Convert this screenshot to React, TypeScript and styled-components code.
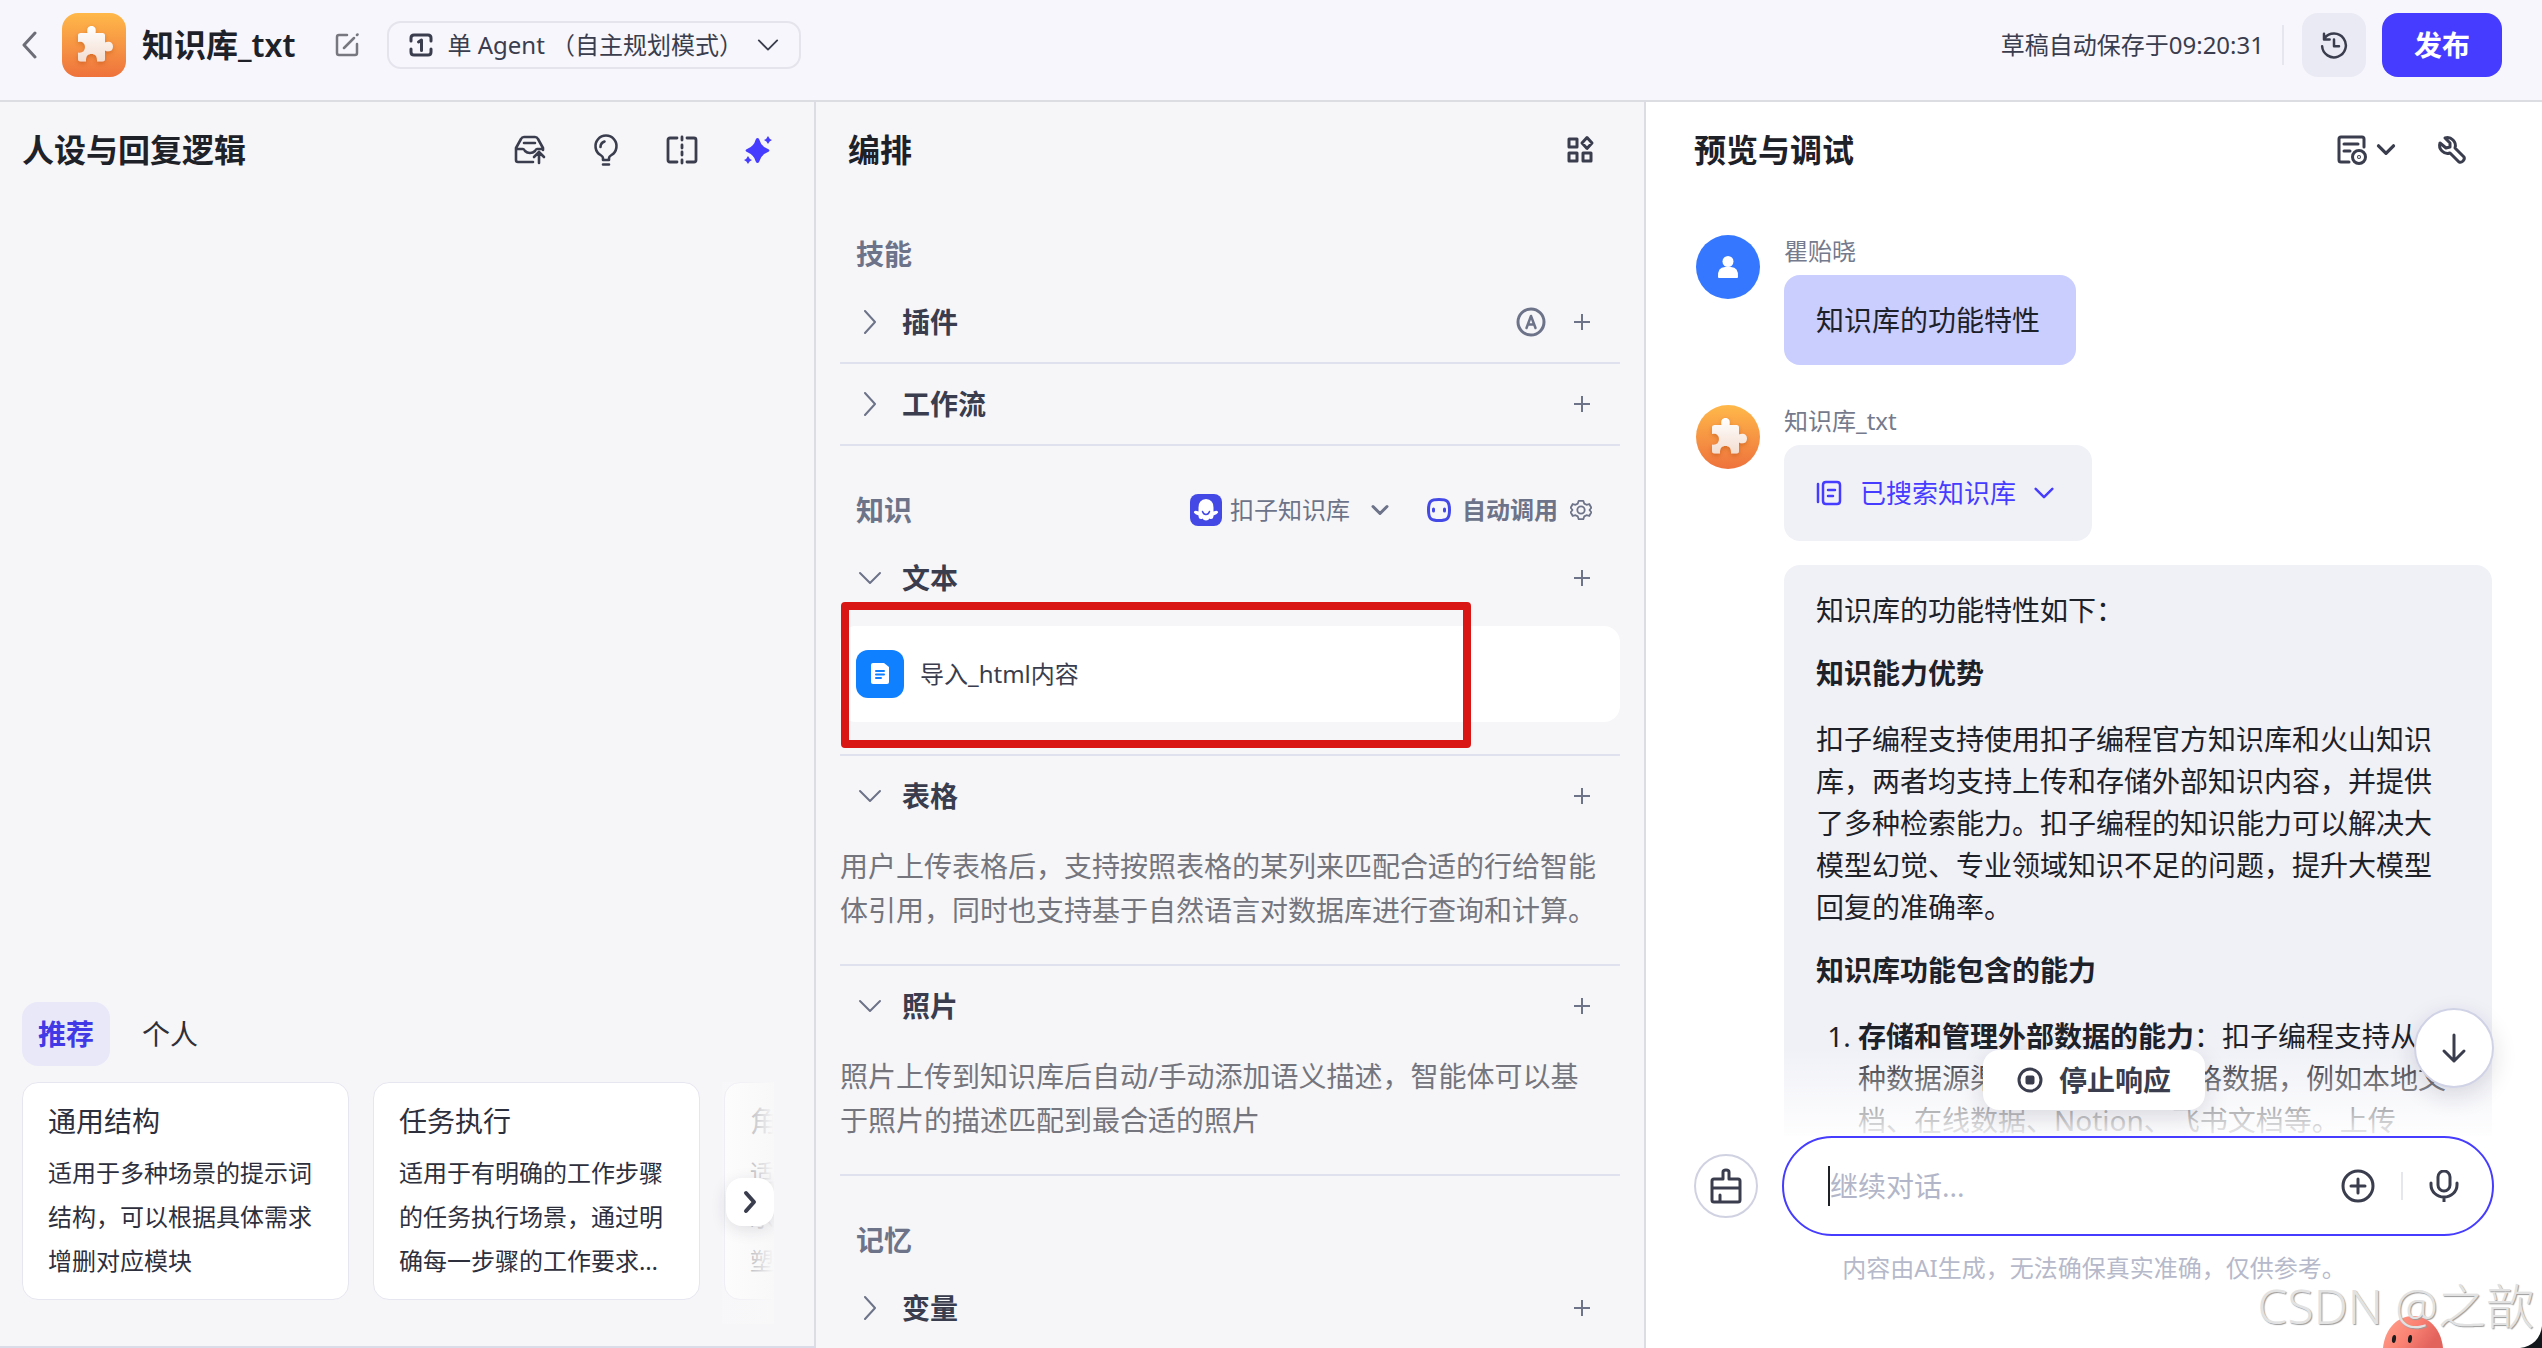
import React from 'react';
import styled, { createGlobalStyle } from 'styled-components';

const ink = '#1f2129';
const inkSoft = '#3a3d4d';
const muted = '#6d7388';
const brand = '#463cff';
const line = '#dcdce3';
const divider = '#dfe1ef';

const GlobalStyle = createGlobalStyle`
  *, *::before, *::after { box-sizing: border-box; }
  html, body { margin: 0; padding: 0; }
  body {
    font-family: "Noto Sans", "Noto Sans CJK SC", sans-serif;
    font-size: 28px;
    line-height: 40px;
    color: ${ink};
    background: #fff;
    overflow: hidden;
  }
  button, input, select { font: inherit; color: inherit; }
  h1, h2, h3, p, ol, ul { margin: 0; padding: 0; font: inherit; }
`;

/* ---------- shell ---------- */

const Page = styled.div`
  display: flex;
  flex-direction: column;
  height: 100vh;
  overflow: hidden;
  position: relative;
`;

const Columns = styled.main`
  flex: 1;
  min-height: 0;
  display: grid;
  grid-template-columns: 816fr 830fr 896fr;
  grid-template-rows: minmax(0, 1fr);
`;

const Panel = styled.section<{ $plain?: boolean; $footed?: boolean }>`
  display: flex;
  flex-direction: column;
  min-width: 0;
  min-height: 0;
  overflow: hidden;
  background: ${p => (p.$plain ? '#fff' : '#f6f6f9')};
  border-right: ${p => (p.$plain ? 'none' : `2px solid ${line}`)};
  border-bottom: ${p => (p.$footed ? '2px solid #dadde8' : 'none')};
`;

const PanelHeader = styled.header<{ $left: number; $right: number }>`
  flex: none;
  display: flex;
  align-items: center;
  justify-content: space-between;
  height: 96px;
  padding: 0 ${p => p.$right}px 0 ${p => p.$left}px;
`;

const PanelTitle = styled.h2`
  font-size: 32px;
  line-height: 40px;
  font-weight: 600;
`;

const Row = styled.div<{ $gap: number }>`
  display: flex;
  align-items: center;
  gap: ${p => p.$gap}px;
`;

const IconButton = styled.button<{ $tone?: string }>`
  display: inline-flex;
  align-items: center;
  justify-content: center;
  flex: none;
  padding: 0;
  border: 0;
  background: none;
  color: ${p => p.$tone ?? inkSoft};
  cursor: pointer;
  svg { display: block; }
`;

/* ---------- top bar ---------- */

const TopBar = styled.header`
  flex: none;
  display: flex;
  align-items: flex-start;
  justify-content: space-between;
  height: 102px;
  padding: 13px 40px 0 18px;
  background: #f7f6fc;
  border-bottom: 2px solid ${line};
`;

const AgentTitle = styled.h1`
  font-size: 32px;
  line-height: 40px;
  font-weight: 600;
`;

const ModeBox = styled.label`
  display: flex;
  align-items: center;
  gap: 14px;
  height: 48px;
  padding: 0 20px;
  border: 2px solid #e5e4ec;
  border-radius: 14px;
  color: ${inkSoft};
`;

const PlainSelect = styled.select<{ $width: number }>`
  appearance: none;
  width: ${p => p.$width}px;
  padding: 0;
  border: 0;
  outline: 0;
  background: none;
  font-size: 24px;
  line-height: 32px;
`;

const SavedNote = styled.span`
  font-size: 24px;
  line-height: 32px;
  color: ${inkSoft};
`;

const Separator = styled.span<{ $height: number }>`
  flex: none;
  width: 2px;
  height: ${p => p.$height}px;
  background: #e6e6ee;
`;

const HistoryButton = styled(IconButton)`
  width: 64px;
  height: 64px;
  border-radius: 16px;
  background: #eaeaf4;
`;

const PublishButton = styled.button`
  height: 64px;
  padding: 0 32px;
  border: 0;
  border-radius: 16px;
  background: ${brand};
  color: #fff;
  font-size: 28px;
  line-height: 40px;
  font-weight: 600;
  cursor: pointer;
`;

/* ---------- prompt panel ---------- */

const PromptSpace = styled.div`
  flex: 1;
`;

const Library = styled.div`
  display: flex;
  flex-direction: column;
  gap: 16px;
  padding: 0 40px 22px 22px;
`;

const Tab = styled.button<{ $active?: boolean }>`
  height: 64px;
  padding: 0 16px;
  border: 0;
  border-radius: 16px;
  background: ${p => (p.$active ? '#e8e8f9' : 'transparent')};
  color: ${p => (p.$active ? '#4338e6' : '#2f3038')};
  font-size: 28px;
  line-height: 40px;
  font-weight: ${p => (p.$active ? 600 : 400)};
  cursor: pointer;
`;

const CardStrip = styled.div`
  position: relative;
  display: flex;
  gap: 24px;
  padding-bottom: 24px;
  overflow: hidden;
`;

const Card = styled.article`
  flex: none;
  width: 327px;
  height: 218px;
  padding: 18px 25px;
  border: 1px solid #e6e6f0;
  border-radius: 16px;
  background: #fff;
  color: #2e2f3c;
`;

const CardTitle = styled.h3`
  font-size: 28px;
  line-height: 40px;
  margin-bottom: 10px;
`;

const CardText = styled.p`
  font-size: 24px;
  line-height: 44px;
  display: -webkit-box;
  -webkit-box-orient: vertical;
  -webkit-line-clamp: 3;
  overflow: hidden;
`;

const StripFade = styled.div`
  position: absolute;
  top: 0;
  right: 0;
  bottom: 0;
  width: 52px;
  background: linear-gradient(90deg, rgba(249, 249, 250, 0.4), #f8f8f9);
`;

const StripNext = styled(IconButton)`
  position: absolute;
  right: 0;
  top: 96px;
  width: 48px;
  height: 48px;
  border-radius: 16px;
  background: #fff;
  box-shadow: 0 4px 16px rgba(30, 30, 60, 0.12);
`;

/* ---------- orchestration panel ---------- */

const SkillList = styled.div`
  display: flex;
  flex-direction: column;
  padding: 28px 24px 0;
`;

const Group = styled.section`
  & + & { margin-top: 36px; }
`;

const GroupHead = styled.div`
  display: flex;
  align-items: center;
  justify-content: space-between;
  height: 56px;
  padding: 0 28px 0 16px;
  color: ${muted};
`;

const GroupTitle = styled.h3`
  font-size: 28px;
  line-height: 40px;
  font-weight: 600;
`;

const SmallChoice = styled.label`
  display: flex;
  align-items: center;
  gap: 8px;
  color: ${muted};
`;

const AutoCall = styled.button`
  display: flex;
  align-items: center;
  gap: 10px;
  padding: 0;
  border: 0;
  background: none;
  font-size: 24px;
  line-height: 32px;
  font-weight: 600;
  cursor: pointer;
`;

const Entry = styled.div`
  border-bottom: 2px solid ${divider};
`;

const EntryHead = styled.div`
  display: flex;
  align-items: center;
  justify-content: space-between;
  height: 80px;
  padding: 0 26px 0 18px;
`;

const EntryToggle = styled.button`
  display: flex;
  align-items: center;
  gap: 20px;
  padding: 0;
  border: 0;
  background: none;
  color: ${muted};
  cursor: pointer;
`;

const EntryName = styled.span`
  font-size: 28px;
  line-height: 40px;
  font-weight: 600;
  color: ${inkSoft};
`;

const EntryBody = styled.div`
  position: relative;
  padding: 8px 0 32px;
`;

const EntryNote = styled.p`
  padding-right: 20px;
  font-size: 28px;
  line-height: 44px;
  color: #74757d;
`;

const FileCard = styled.div`
  display: flex;
  align-items: center;
  gap: 16px;
  height: 96px;
  padding: 0 16px;
  border-radius: 16px;
  background: #fff;
  color: ${inkSoft};
  font-size: 24px;
  line-height: 32px;
`;

const FileBadge = styled.span`
  display: grid;
  place-items: center;
  width: 48px;
  height: 48px;
  border-radius: 12px;
  background: #0f80ff;
`;

const Marker = styled.div`
  position: absolute;
  top: -16px;
  bottom: 6px;
  left: 1px;
  right: 149px;
  border: 8px solid #d91613;
  border-radius: 4px;
`;

/* ---------- preview panel ---------- */

const Thread = styled.div`
  position: relative;
  flex: 1;
  min-height: 0;
  overflow: hidden;
  padding: 37px 50px 0;
  display: flex;
  flex-direction: column;
  gap: 40px;
`;

const Message = styled.article`
  display: flex;
  align-items: flex-start;
  gap: 24px;
`;

const MessageBody = styled.div`
  flex: 1;
  min-width: 0;
  display: flex;
  flex-direction: column;
  align-items: flex-start;
`;

const Sender = styled.span`
  margin-bottom: 8px;
  font-size: 24px;
  line-height: 32px;
  color: #757a8c;
`;

const Bubble = styled.div<{ $mine?: boolean }>`
  padding: 24px 36px 24px 32px;
  border-radius: 16px;
  background: ${p => (p.$mine ? '#c9ceff' : '#f0f1f7')};
  line-height: 42px;
`;

const Searched = styled.button`
  display: flex;
  align-items: center;
  gap: 18px;
  height: 96px;
  margin-bottom: 24px;
  padding: 0 38px 0 32px;
  border: 0;
  border-radius: 16px;
  background: #f0f1f7;
  color: ${brand};
  font-size: 26px;
  line-height: 40px;
  cursor: pointer;
`;

const Answer = styled(Bubble)`
  width: 100%;
  p + h3 { margin-top: 21px; }
`;

const AnswerHeading = styled.h3`
  font-weight: 700;
  margin-bottom: 24px;
`;

const AnswerList = styled.ol`
  padding-left: 42px;
  strong { font-weight: 700; }
`;

const UserAvatar = styled.span`
  display: grid;
  place-items: center;
  flex: none;
  width: 64px;
  height: 64px;
  border-radius: 50%;
  background: #3578ff;
`;

const ThreadFade = styled.div`
  position: absolute;
  left: 0;
  right: 0;
  bottom: 0;
  height: 88px;
  background: linear-gradient(rgba(255, 255, 255, 0), rgba(255, 255, 255, 0.92));
`;

const StopButton = styled.button`
  position: absolute;
  left: 50%;
  bottom: 26px;
  transform: translateX(-50%);
  display: flex;
  align-items: center;
  gap: 16px;
  height: 60px;
  padding: 0 34px;
  border: 0;
  border-radius: 16px;
  background: #fff;
  color: ${inkSoft};
  font-size: 28px;
  line-height: 40px;
  font-weight: 600;
  white-space: nowrap;
  box-shadow: 0 8px 24px rgba(30, 30, 60, 0.14);
  cursor: pointer;
`;

const ToBottom = styled(IconButton)`
  position: absolute;
  right: 48px;
  bottom: 48px;
  width: 80px;
  height: 80px;
  border: 2px solid #d0d2e6;
  border-radius: 50%;
  background: #fff;
  box-shadow: 0 8px 24px rgba(30, 30, 60, 0.14);
`;

const Composer = styled.form`
  flex: none;
  display: flex;
  align-items: center;
  gap: 24px;
  padding: 0 48px;
`;

const ClearButton = styled(IconButton)`
  width: 64px;
  height: 64px;
  border: 2px solid #d0d2e2;
  border-radius: 50%;
`;

const InputShell = styled.div`
  flex: 1;
  display: flex;
  align-items: center;
  gap: 25px;
  height: 100px;
  padding: 0 32px 0 44px;
  border: 2px solid ${brand};
  border-radius: 50px;
  background: #fff;
`;

const InputField = styled.div`
  flex: 1;
  display: flex;
  align-items: center;
  height: 40px;
`;

const Caret = styled.span`
  width: 2px;
  height: 40px;
  background: ${ink};
`;

const MessageInput = styled.input`
  flex: 1;
  min-width: 0;
  padding: 0;
  border: 0;
  outline: 0;
  background: none;
  font-size: 28px;
  &::placeholder { color: #b2b6c8; opacity: 1; }
`;

const Disclaimer = styled.p`
  flex: none;
  padding: 16px 0 64px;
  text-align: center;
  font-size: 24px;
  line-height: 32px;
  color: #b6b9ca;
`;

/* ---------- overlays ---------- */

const Watermark = styled.div`
  position: absolute;
  right: 8px;
  bottom: 10px;
  font-size: 48px;
  line-height: 64px;
  font-weight: 300;
  color: #e2e2e2;
  text-shadow: 1px 1px 1px #9b9b9b;
  pointer-events: none;
`;

const Mascot = styled.svg`
  position: absolute;
  right: 98px;
  bottom: 0;
`;

const WindowCorner = styled.svg`
  position: absolute;
  right: 0;
  bottom: 0;
`;

/* ---------- icons ---------- */

type IconProps = { size: number; box?: number; width?: number; children: React.ReactNode };

const Icon = ({ size, box = 24, width = 2, children }: IconProps) => (
  <svg width={size} height={size} viewBox={`0 0 ${box} ${box}`} fill="none" stroke="currentColor"
    strokeWidth={width} strokeLinecap="round" strokeLinejoin="round" aria-hidden="true">
    {children}
  </svg>
);

const ChevronDown = ({ size, width = 2 }: { size: number; width?: number }) => (
  <Icon size={size} width={width}><path d="M2 7l10 10L22 7" /></Icon>
);

const ChevronRight = ({ size, width = 2 }: { size: number; width?: number }) => (
  <Icon size={size} width={width}><path d="M7 1l10 11L7 23" /></Icon>
);

const Plus = () => <Icon size={24}><path d="M4 12h16M12 4v16" strokeLinecap="butt" /></Icon>;

const AvatarArt = styled.svg`
  flex: none;
  display: block;
`;

const PuzzleAvatar = ({ id, round }: { id: string; round?: boolean }) => (
  <AvatarArt width="64" height="64" viewBox="0 0 64 64" aria-hidden="true">
    <defs>
      <linearGradient id={`${id}-bg`} x1="0" y1="0" x2="0" y2="1">
        <stop offset="0" stopColor="#ffb84a" />
        <stop offset="1" stopColor="#ee723c" />
      </linearGradient>
      <linearGradient id={`${id}-fg`} x1="0" y1="0" x2="0" y2="1">
        <stop offset="0" stopColor="#ffffff" />
        <stop offset="1" stopColor="#f3ddd0" />
      </linearGradient>
      <filter id={`${id}-sh`} x="-30%" y="-30%" width="160%" height="160%">
        <feDropShadow dx="0" dy="2" stdDeviation="2" floodColor="#a8400f" floodOpacity="0.4" />
      </filter>
    </defs>
    <rect width="64" height="64" rx={round ? 32 : 16} fill={`url(#${id}-bg)`} />
    <path filter={`url(#${id}-sh)`} fill={`url(#${id}-fg)`}
      d="M18.5 20H25.5C24.5 15 26.5 13 29.5 13S34.5 15 33.5 20H40.5Q43 20 43 22.500V29.500C47 27.500 51 29 51 33.500S47 39.500 43 37.500V46Q43 48.500 40.500 48.500H35V47C35 43 33 41 29.500 41S24 43 24 47V48.500H18.500Q16 48.500 16 46V39.500C20 40.500 23 38 23 34S20 28 16 29V22.500Q16 20 18.500 20Z" />
  </AvatarArt>
);

/* ---------- sections ---------- */

const Header = () => (
  <TopBar>
    <Row $gap={28}>
      <Row $gap={40}>
        <Row $gap={16}>
          <Row $gap={20}>
            <IconButton aria-label="返回" $tone="#6d6d78">
              <svg width="24" height="28" viewBox="0 0 24 28" fill="none" stroke="currentColor" strokeWidth="3" strokeLinecap="round" strokeLinejoin="round">
                <path d="M17 2L6 14l11 12" />
              </svg>
            </IconButton>
            <PuzzleAvatar id="head" />
          </Row>
          <AgentTitle>知识库_txt</AgentTitle>
        </Row>
        <IconButton aria-label="编辑" $tone="#77777f">
          <Icon size={24}><path d="M12 2H4Q2 2 2 4v16q0 2 2 2h16q2 0 2-2v-9M9 15L19 5M22 2l.5-.5" strokeWidth="2.500" /></Icon>
        </IconButton>
      </Row>
      <ModeBox>
        <Icon size={24} width={3}>
          <path d="M2 8V5q0-3 3-3h14q3 0 3 3v3M2 16v3q0 3 3 3h14q3 0 3-3v-3M9.500 9L12.500 7v10.500" />
        </Icon>
        <PlainSelect $width={296} aria-label="模式">
          <option>单 Agent （自主规划模式）</option>
        </PlainSelect>
        <ChevronDown size={22} />
      </ModeBox>
    </Row>
    <Row $gap={16}>
      <Row $gap={18}>
        <SavedNote>草稿自动保存于09:20:31</SavedNote>
        <Separator $height={40} />
        <HistoryButton aria-label="历史版本">
          <Icon size={30}>
            <path d="M4.500 6.500A9.500 9.500 0 1 1 2.500 13M4 3v4.500h4.500M12 7.500V13h4" />
          </Icon>
        </HistoryButton>
      </Row>
      <PublishButton>发布</PublishButton>
    </Row>
  </TopBar>
);

const cards = [
  { title: '通用结构', text: '适用于多种场景的提示词结构，可以根据具体需求增删对应模块' },
  { title: '任务执行', text: '适用于有明确的工作步骤的任务执行场景，通过明确每一步骤的工作要求和标准，获得稳定的输出结果' },
  { title: '角色扮演', text: '适用于聊天陪伴、互动娱乐场景，可帮助模型轻松塑造个性化的人物角色' },
];

const PromptPanel = () => (
  <Panel $footed>
    <PanelHeader $left={22} $right={40}>
      <PanelTitle>人设与回复逻辑</PanelTitle>
      <Row $gap={44}>
        <IconButton aria-label="提交到提示词库">
          <Icon size={32} box={32} width={3}>
            <path d="M19 28H4Q2 28 2 26V14L7 5Q8 3 10 3H21Q23 3 24 5l5 9v2M10 9h11M2 15h7q1 0 2 2 2 2 5 2t5-2q1-2 2-2h6M25 29V19M20 23l5-5 5 5" strokeWidth="2.600" />
          </Icon>
        </IconButton>
        <IconButton aria-label="提示">
          <Icon size={32} box={32}>
            <path d="M13 26v-2q0-1.500-2.500-3A10.500 10.500 0 1 1 21.500 21q-2.500 1.500-2.500 3v2zM13 30.500h6M10.500 13q0-4 4-5.500" strokeWidth="2.600" />
          </Icon>
        </IconButton>
        <IconButton aria-label="对比调试">
          <Icon size={32} box={32}>
            <path d="M11 4H4Q2 4 2 6V26Q2 28 4 28H11M21 4h7q2 0 2 2V26q0 2-2 2H21M16 3v3M16 11v3M16 18v3M16 26v3" strokeWidth="2.800" />
          </Icon>
        </IconButton>
        <IconButton aria-label="优化" $tone={brand}>
          <svg width="32" height="32" viewBox="0 0 32 32" fill="currentColor">
            <path d="M15.500 4Q17 4 17.500 6 19 12 25 14.500 27.500 15.500 27.500 16.500T25 18.500Q19 21 17.500 27 17 29 15.500 29T13.500 27Q12 21 6 18.500 3.500 17.500 3.500 16.500T6 14.500Q12 12 13.500 6 14 4 15.500 4ZM26 2Q27.200 5 30 6 27.200 7 26 10 24.800 7 22 6 24.800 5 26 2ZM6 22Q7.200 25 10 26 7.200 27 6 30 4.800 27 2 26 4.800 25 6 22Z" />
          </svg>
        </IconButton>
      </Row>
    </PanelHeader>
    <PromptSpace />
    <Library>
      <Row $gap={16} role="tablist">
        <Tab $active role="tab" aria-selected="true">推荐</Tab>
        <Tab role="tab" aria-selected="false">个人</Tab>
      </Row>
      <CardStrip>
        {cards.map(c => (
          <Card key={c.title}>
            <CardTitle>{c.title}</CardTitle>
            <CardText>{c.text}</CardText>
          </Card>
        ))}
        <StripFade />
        <StripNext aria-label="下一页">
          <Icon size={24} width={4}><path d="M8 3l8 9-8 9" /></Icon>
        </StripNext>
      </CardStrip>
    </Library>
  </Panel>
);

type SkillProps = { name: string; open?: boolean; auto?: boolean; children?: React.ReactNode };

const Skill = ({ name, open, auto, children }: SkillProps) => (
  <Entry>
    <EntryHead>
      <EntryToggle aria-expanded={!!open}>
        {open ? <ChevronDown size={24} /> : <ChevronRight size={24} />}
        <EntryName>{name}</EntryName>
      </EntryToggle>
      <Row $gap={24}>
        {auto && (
          <IconButton aria-label="自动添加" $tone={muted}>
            <Icon size={30} box={30} width={3}>
              <circle cx="15" cy="15" r="13" />
              <path d="M10.500 21L15 9l4.500 12M12 17.500h6" strokeWidth="2.500" />
            </Icon>
          </IconButton>
        )}
        <IconButton aria-label={`添加${name}`} $tone={muted}><Plus /></IconButton>
      </Row>
    </EntryHead>
    {children && <EntryBody>{children}</EntryBody>}
  </Entry>
);

const SkillPanel = () => (
  <Panel>
    <PanelHeader $left={32} $right={48}>
      <PanelTitle>编排</PanelTitle>
      <IconButton aria-label="布局">
        <Icon size={32} box={32} width={3}>
          <path d="M5 5h8v8H5zM5 19h8v8H5zM19 19h8v8h-8zM23 3.500L28 9l-5 5.500L18 9z" />
        </Icon>
      </IconButton>
    </PanelHeader>
    <SkillList>
      <Group>
        <GroupHead><GroupTitle>技能</GroupTitle></GroupHead>
        <Skill name="插件" auto />
        <Skill name="工作流" />
      </Group>
      <Group>
        <GroupHead>
          <GroupTitle>知识</GroupTitle>
          <Row $gap={34}>
            <SmallChoice>
              <svg width="32" height="32" viewBox="0 0 32 32" aria-hidden="true">
                <rect width="32" height="32" rx="8" fill="#4449e6" />
                <path fill="#fff" d="M16 5Q23.500 5.500 23.500 13.500V17.500Q25 17 26.500 16.800 28.500 17 28 18.800 27 20.500 23.500 21.500 23.500 25 21 25 20 25 19.500 24.500 18.500 26.500 16 26.500T12.500 24.500Q12 25 11 25 8.500 25 8.500 21.500 5 20.500 4 18.800 3.500 17 5.500 16.800 7 17 8.500 17.500V13.500Q8.500 5.500 16 5Z" />
                <path fill="none" stroke="#4449e6" strokeWidth="1.500" strokeLinecap="round" d="M12.500 17.500q1 3 3.500 3t3.500-3" />
              </svg>
              <PlainSelect $width={130} aria-label="知识库类型"><option>扣子知识库</option></PlainSelect>
              <Icon size={24} width={3}><path d="M5 8.500l7 7 7-7" /></Icon>
            </SmallChoice>
            <Row $gap={12}>
              <AutoCall>
                <Icon size={26} box={26} width={3}>
                  <path stroke="#4449e6" d="M13 2.500c8 0 10.500 1.500 10.500 10.500S21 23.500 13 23.500 2.500 22 2.500 13 5 2.500 13 2.500Z" />
                  <path stroke="#4449e6" d="M7.500 12v2M18.500 12v2" />
                </Icon>
                自动调用
              </AutoCall>
              <IconButton aria-label="设置" $tone={muted}>
                <Icon size={22}>
                  <path d="M9.500 2h5l1 3 2.500 1.300 3-.8 2.300 4-2 2.500 2 2.500-2.300 4-3-.8-2.500 1.300-1 3h-5l-1-3L6 17.700l-3 .8-2.300-4 2-2.500-2-2.500L3 5.500l3 .8L8.500 5z" />
                  <circle cx="12" cy="12" r="4" />
                </Icon>
              </IconButton>
            </Row>
          </Row>
        </GroupHead>
        <Skill name="文本" open>
          <FileCard>
            <FileBadge>
              <svg width="24" height="24" viewBox="0 0 24 24" aria-hidden="true">
                <path fill="#fff" d="M5 1h11l5 4v15q0 2-2 2H5q-2 0-2-2V3q0-2 2-2Z" />
                <path stroke="#0f80ff" strokeWidth="2" strokeLinecap="round" d="M8 9h8M8 12.500h8M8 16h5" />
              </svg>
            </FileBadge>
            导入_html内容
          </FileCard>
          <Marker />
        </Skill>
        <Skill name="表格" open>
          <EntryNote>用户上传表格后，支持按照表格的某列来匹配合适的行给智能体引用，同时也支持基于自然语言对数据库进行查询和计算。</EntryNote>
        </Skill>
        <Skill name="照片" open>
          <EntryNote>照片上传到知识库后自动/手动添加语义描述，智能体可以基于照片的描述匹配到最合适的照片</EntryNote>
        </Skill>
      </Group>
      <Group>
        <GroupHead><GroupTitle>记忆</GroupTitle></GroupHead>
        <Skill name="变量" />
      </Group>
    </SkillList>
  </Panel>
);

const PreviewPanel = () => (
  <Panel $plain>
    <PanelHeader $left={48} $right={74}>
      <PanelTitle>预览与调试</PanelTitle>
      <Row $gap={40}>
        <Row $gap={8}>
          <IconButton aria-label="调试记录">
            <Icon size={32} box={32} width={3}>
              <path d="M13 28H5Q3 28 3 26V5Q3 3 5 3H26Q28 3 28 5V13M8 10h14M8 17h6" />
              <circle cx="23" cy="23" r="6.500" />
              <circle cx="23" cy="23" r="0.500" />
            </Icon>
          </IconButton>
          <IconButton aria-label="展开">
            <Icon size={20} width={4}><path d="M3 7l9 9 9-9" /></Icon>
          </IconButton>
        </Row>
        <IconButton aria-label="调试工具">
          <Icon size={32} box={32} width={3}>
            <path d="M9 4l5 5v4l-4 1-6-5c-1 3 0 6 2 8s5 3 8 2l9 9q2 1 4-1t1-4l-9-9c1-3 0-6-2-8s-5-3-8-2Z" />
          </Icon>
        </IconButton>
      </Row>
    </PanelHeader>
    <Thread>
      <Message>
        <UserAvatar>
          <svg width="24" height="24" viewBox="0 0 24 24" fill="#fff" aria-hidden="true">
            <circle cx="12" cy="6.500" r="5.500" />
            <path d="M2 22q-.5-10 7-10h6q7.500 0 7 10 0 1-1 1H3q-1 0-1-1Z" />
          </svg>
        </UserAvatar>
        <MessageBody>
          <Sender>瞿贻晓</Sender>
          <Bubble $mine>知识库的功能特性</Bubble>
        </MessageBody>
      </Message>
      <Message>
        <PuzzleAvatar id="chat" round />
        <MessageBody>
          <Sender>知识库_txt</Sender>
          <Searched>
            <Icon size={26} box={26} width={3}>
              <path d="M2 4v18M10 2h11q3 0 3 3v16q0 3-3 3H10q-3 0-3-3V5q0-3 3-3ZM12 10h7M12 16h5" strokeWidth="2.500" />
            </Icon>
            已搜索知识库
            <Icon size={20} width={3}><path d="M2 7l10 10L22 7" /></Icon>
          </Searched>
          <Answer>
            <p>知识库的功能特性如下：</p>
            <AnswerHeading>知识能力优势</AnswerHeading>
            <p>扣子编程支持使用扣子编程官方知识库和火山知识库，两者均支持上传和存储外部知识内容，并提供了多种检索能力。扣子编程的知识能力可以解决大模型幻觉、专业领域知识不足的问题，提升大模型回复的准确率。</p>
            <AnswerHeading>知识库功能包含的能力</AnswerHeading>
            <AnswerList>
              <li><strong>存储和管理外部数据的能力</strong>：扣子编程支持从多种数据源渠道上传文本和表格数据，例如本地文档、在线数据、Notion、飞书文档等。上传</li>
            </AnswerList>
          </Answer>
        </MessageBody>
      </Message>
      <ThreadFade />
      <StopButton>
        <Icon size={26} box={26} width={3}>
          <circle cx="13" cy="13" r="11" />
          <rect x="9.500" y="9.500" width="7" height="7" rx="1" fill="currentColor" strokeWidth="2" />
        </Icon>
        停止响应
      </StopButton>
      <ToBottom aria-label="滚动到底部">
        <Icon size={32} box={32} width={3}><path d="M16 3v26M6 19l10 10 10-10" /></Icon>
      </ToBottom>
    </Thread>
    <Composer onSubmit={e => e.preventDefault()}>
      <ClearButton type="button" aria-label="清除上下文">
        <Icon size={36} box={36} width={3}>
          <path d="M15 11V4q0-2 3-2t3 2v7h9q2 0 2 2v19q0 2-2 2H6q-2 0-2-2V13q0-2 2-2ZM4 20h28M12 33v-6" />
        </Icon>
      </ClearButton>
      <InputShell>
        <InputField>
          <Caret />
          <MessageInput placeholder="继续对话..." aria-label="继续对话" />
        </InputField>
        <IconButton type="button" aria-label="添加附件">
          <Icon size={36} box={36} width={3}><circle cx="18" cy="18" r="15" /><path d="M11 18h14M18 11v14" /></Icon>
        </IconButton>
        <Separator $height={28} />
        <IconButton type="button" aria-label="语音输入">
          <Icon size={32} box={32} width={3}>
            <rect x="10" y="1" width="12" height="20" rx="6" />
            <path d="M3 13v2a13 12 0 0 0 26 0v-2M16 27v5" />
          </Icon>
        </IconButton>
      </InputShell>
    </Composer>
    <Disclaimer>内容由AI生成，无法确保真实准确，仅供参考。</Disclaimer>
  </Panel>
);

export default function App() {
  return (
    <>
      <GlobalStyle />
      <Page>
        <Header />
        <Columns>
          <PromptPanel />
          <SkillPanel />
          <PreviewPanel />
        </Columns>
        <Mascot width="62" height="32" viewBox="0 0 62 32" aria-hidden="true">
          <defs>
            <linearGradient id="mascot" x1="0" y1="0" x2="1" y2="0.400">
              <stop offset="0" stopColor="#ffa38e" />
              <stop offset="0.550" stopColor="#fb8374" />
              <stop offset="1" stopColor="#e2625c" />
            </linearGradient>
          </defs>
          <path fill="url(#mascot)" d="M1 32C3 12 16 0 31 0s28 12 30 32Z" />
          <ellipse cx="12" cy="23" rx="2" ry="4" fill="#1d1d1d" transform="rotate(8 12 23)" />
          <ellipse cx="28" cy="23" rx="2" ry="4" fill="#1d1d1d" transform="rotate(8 28 23)" />
        </Mascot>
        <Watermark>CSDN @之歆</Watermark>
        <WindowCorner width="22" height="22" viewBox="0 0 22 22" aria-hidden="true">
          <path fill="#12181b" d="M22 0V22H0C12 21 21 12 22 0Z" />
        </WindowCorner>
      </Page>
    </>
  );
}
